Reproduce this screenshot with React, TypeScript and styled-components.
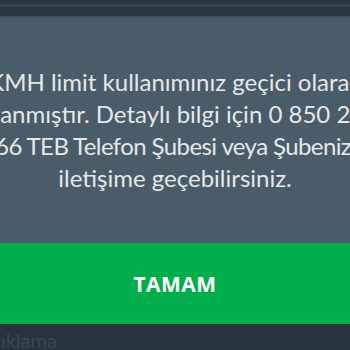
import React from "react";
import styled, { createGlobalStyle } from "styled-components";

const Global = createGlobalStyle`
  html, body { margin: 0; padding: 0; background: #283741; }
  body { width: 350px; height: 350px; overflow: hidden; }
`;

const Page = styled.div`
  width: 350px;
  height: 350px;
  overflow: hidden;
  display: flex;
  flex-direction: column;
  background: #283741;
  font-family: Lato, "Noto Sans", sans-serif;
`;

const TopBar = styled.div`
  height: 18px;
  padding-top: 4px;
  box-sizing: border-box;
  background: #283741;
  border-bottom: 2px solid #3e505a;
`;

const Stripe = styled.div`
  height: 3px;
  background: #34444e;
`;

const Dialog = styled.div`
  height: 232px;
  background: #4a5c67;
  overflow: hidden;
  display: flex;
  flex-direction: column;
  padding-top: 48px;
  box-sizing: border-box;
`;

const TextBlock = styled.div`
  margin: 0 -200px;
  text-align: center;
  white-space: nowrap;
  color: #e3e8ea;
  font-size: 24px;
  line-height: 32px;
`;

const Line = styled.div<{ $tight?: boolean }>`
  letter-spacing: ${(p) => (p.$tight ? "-0.6px" : "0")};
`;

const Button = styled.div`
  height: 84px;
  background: #00ae4b;
  display: flex;
  align-items: center;
  justify-content: center;
  color: #ffffff;
  font-family: "Open Sans", Lato, sans-serif;
  font-weight: 700;
  font-size: 21px;
  letter-spacing: 0.5px;
  padding-top: 2px;
  box-sizing: border-box;
`;

const Footer = styled.div`
  flex: 1;
  background: #27333d;
  color: #3a4853;
  font-size: 20px;
  line-height: 20px;
  padding-top: 6px;
  margin-left: -22px;
  white-space: nowrap;
`;

export default function App() {
  return (
    <>
      <Global />
      <Page>
        <TopBar>
          <Stripe />
        </TopBar>
        <Dialog>
          <TextBlock>
            <Line>KMH limit kullanımınız geçici olarak</Line>
            <Line>kısıtlanmıştır. Detaylı bilgi için 0 850 200 0</Line>
            <Line $tight>666 TEB Telefon Şubesi veya Şubenizle</Line>
            <Line>iletişime geçebilirsiniz.</Line>
          </TextBlock>
        </Dialog>
        <Button>TAMAM</Button>
        <Footer>Açıklama</Footer>
      </Page>
    </>
  );
}
